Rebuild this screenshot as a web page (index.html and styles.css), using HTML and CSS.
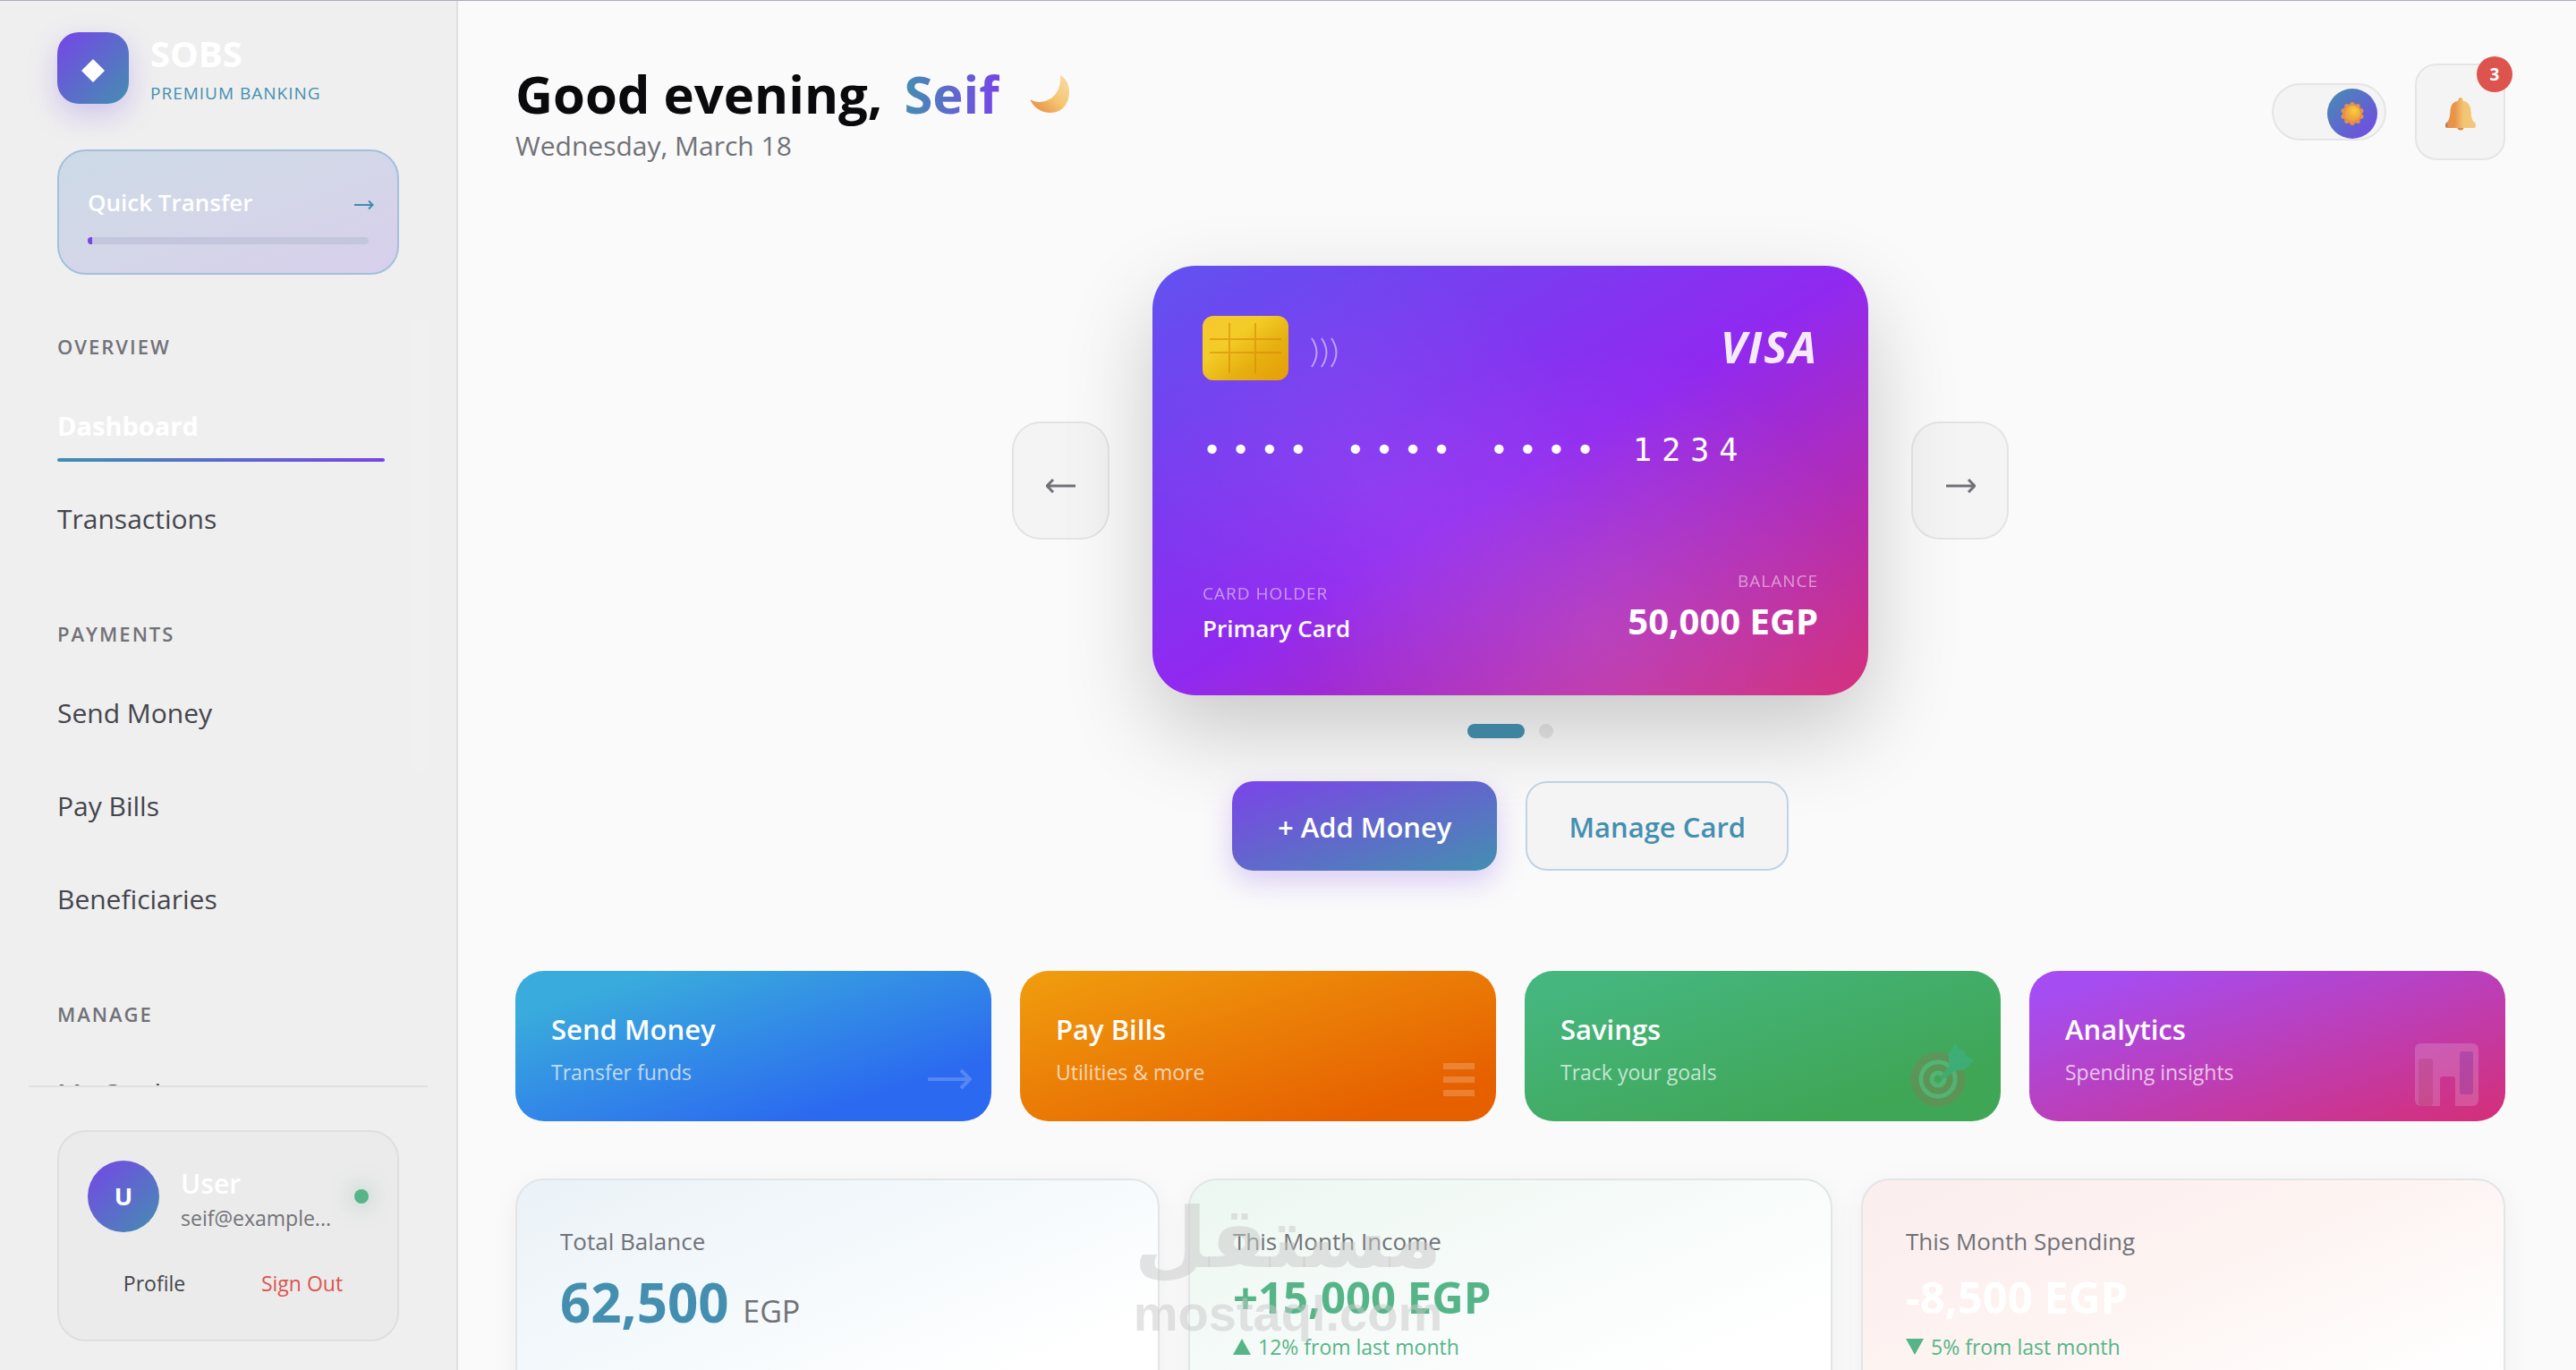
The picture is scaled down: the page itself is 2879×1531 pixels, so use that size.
FILE: index.html
```html
<!DOCTYPE html>
<html lang="en">
<head>
<meta charset="utf-8">
<meta name="viewport" content="width=device-width, initial-scale=1">
<title>SOBS Premium Banking</title>
<link rel="stylesheet" href="styles.css">
</head>
<body>
<div class="app">
  <aside class="sidebar">
    <div class="brand">
      <div class="brand-logo">
        <svg width="28" height="28" viewBox="0 0 28 28" aria-hidden="true"><path d="M14 1 27 14 14 27 1 14Z" fill="#fff"/></svg>
      </div>
      <div>
        <div class="brand-name">SOBS</div>
        <div class="brand-tag">PREMIUM BANKING</div>
      </div>
    </div>

    <a class="quick-transfer" href="#transfer">
      <span class="quick-transfer-row">
        <span>Quick Transfer</span>
        <svg width="22" height="12" viewBox="0 0 22 12" fill="none" stroke="#3e8cae" stroke-width="2" aria-hidden="true"><path d="M0 6H20M16 1.500 20.500 6 16 10.500"/></svg>
      </span>
      <span class="progress"><span class="progress-value"></span></span>
    </a>

    <nav class="nav">
      <section>
        <h2 class="nav-title">OVERVIEW</h2>
        <a class="nav-link active" href="#dashboard">Dashboard</a>
        <a class="nav-link" href="#transactions">Transactions</a>
      </section>
      <section>
        <h2 class="nav-title">PAYMENTS</h2>
        <a class="nav-link" href="#send">Send Money</a>
        <a class="nav-link" href="#bills">Pay Bills</a>
        <a class="nav-link" href="#beneficiaries">Beneficiaries</a>
      </section>
      <section>
        <h2 class="nav-title">MANAGE</h2>
        <a class="nav-link" href="#cards">My Cards</a>
      </section>
      <span class="nav-thumb"></span>
    </nav>

    <div class="account">
      <div class="account-card">
        <div class="account-row">
          <div class="avatar">U</div>
          <div class="account-text">
            <div class="account-name">User</div>
            <div class="account-mail">seif@example...</div>
          </div>
          <span class="online"></span>
        </div>
        <div class="account-actions">
          <button type="button">Profile</button>
          <button type="button" class="danger">Sign Out</button>
        </div>
      </div>
    </div>
  </aside>

  <main class="main">
    <header class="header">
      <div>
        <h1 class="greeting">
          <span>Good evening,</span>
          <span class="greeting-name">Seif</span>
          <svg width="64" height="48" viewBox="3 0 64 48" aria-hidden="true">
            <defs><linearGradient id="moon" x1="1" y1="0" x2="0" y2="1"><stop offset="0" stop-color="#f8dcae"/><stop offset=".5" stop-color="#f5c56f"/><stop offset="1" stop-color="#e4843c"/></linearGradient></defs>
            <path d="M47 3C58 9 60 25 53 36C45 49 23 48 14 32C13 30 15 31 17 32C31 36 49 27 47 3Z" fill="url(#moon)"/>
          </svg>
        </h1>
        <p class="date">Wednesday, March 18</p>
      </div>
      <div class="header-tools">
        <label class="switch">
          <input type="checkbox" checked aria-label="Light theme">
          <span class="knob">
            <svg width="28" height="28" viewBox="0 0 28 28" aria-hidden="true">
              <defs><radialGradient id="sun" cx=".6" cy=".35"><stop offset="0" stop-color="#fbcf3c"/><stop offset="1" stop-color="#efa63c"/></radialGradient></defs>
              <g fill="#e6904a"><circle cx="14" cy="14" r="11"/><circle cx="14" cy="3.500" r="2.500"/><circle cx="20.200" cy="5.500" r="2.500"/><circle cx="24" cy="10.700" r="2.500"/><circle cx="24" cy="17.300" r="2.500"/><circle cx="20.200" cy="22.500" r="2.500"/><circle cx="14" cy="24.500" r="2.500"/><circle cx="7.800" cy="22.500" r="2.500"/><circle cx="4" cy="17.300" r="2.500"/><circle cx="4" cy="10.700" r="2.500"/><circle cx="7.800" cy="5.500" r="2.500"/></g>
              <circle cx="14.500" cy="13.500" r="8.500" fill="url(#sun)"/>
            </svg>
          </span>
        </label>
        <button type="button" class="bell" aria-label="Notifications">
          <svg width="36" height="38" viewBox="0 0 36 38" aria-hidden="true">
            <defs><linearGradient id="bell"><stop offset=".3" stop-color="#e8934a"/><stop offset=".6" stop-color="#f4c473"/><stop offset="1" stop-color="#f3c77d"/></linearGradient></defs>
            <circle cx="18" cy="34" r="3.500" fill="#dd8840"/>
            <path d="M18 1C20 1 20.500 2.500 20.500 4.500C27 6 29 10 29.500 16C30 24 31 27 34 29C35.500 31 35 35 34 35H2C1 35 .5 31 2 29C5 27 6 24 6.500 16C7 10 9 6 15.500 4.500C15.500 2.500 16 1 18 1Z" fill="url(#bell)"/>
            <path d="M1 30H4V34H1Z" fill="#b98468"/>
          </svg>
          <span class="badge">3</span>
        </button>
      </div>
    </header>

    <section class="hero">
      <div class="carousel">
        <button type="button" class="carousel-arrow" aria-label="Previous card">
          <svg width="34" height="16" viewBox="0 0 34 16" fill="none" stroke="currentColor" stroke-width="3" aria-hidden="true"><path d="M33 8H1M8 1 1 8 8 15"/></svg>
        </button>
        <article class="bank-card">
          <div class="card-top">
            <div class="chip-group">
              <svg class="chip" width="96" height="72" viewBox="0 0 96 72" aria-hidden="true">
                <defs><linearGradient id="chip" x1="0" y1="0" x2="1" y2="1"><stop offset="0" stop-color="#f7c72f"/><stop offset=".35" stop-color="#f3cc28"/><stop offset=".65" stop-color="#e6b010"/><stop offset="1" stop-color="#e69c0a"/></linearGradient></defs>
                <rect width="96" height="72" rx="12" fill="url(#chip)"/>
                <path d="M30 8V64M59 8V64M8 26H88M8 41H88" stroke="#d98808" stroke-opacity=".6" stroke-width="2"/>
              </svg>
              <svg width="34" height="34" viewBox="0 0 34 34" fill="none" stroke="#fff" stroke-opacity=".5" stroke-width="2" aria-hidden="true"><path d="M2 1Q13 17 2 33M13 1Q24 17 13 33M24 1Q35 17 24 33"/></svg>
            </div>
            <div class="card-brand">VISA</div>
          </div>
          <div class="card-number">•••• •••• •••• 1234</div>
          <div class="card-bottom">
            <div>
              <div class="card-label">CARD HOLDER</div>
              <div class="card-holder">Primary Card</div>
            </div>
            <div class="card-right">
              <div class="card-label">BALANCE</div>
              <div class="card-balance">50,000 EGP</div>
            </div>
          </div>
        </article>
        <button type="button" class="carousel-arrow" aria-label="Next card">
          <svg width="34" height="16" viewBox="0 0 34 16" fill="none" stroke="currentColor" stroke-width="3" aria-hidden="true"><path d="M1 8H33M26 1 33 8 26 15"/></svg>
        </button>
      </div>
      <div class="dots"><span class="dot on"></span><span class="dot"></span></div>
      <div class="hero-actions">
        <button type="button" class="btn primary">+ Add Money</button>
        <button type="button" class="btn outline">Manage Card</button>
      </div>
    </section>

    <section class="quick-actions">
      <a class="action send" href="#send">
        <span class="action-title">Send Money</span>
        <span class="action-sub">Transfer funds</span>
        <svg class="action-icon" width="80" height="72" viewBox="0 0 80 72" fill="none" stroke="#fff" stroke-width="4" aria-hidden="true"><path d="M31 41H77M68 31 78 41 68 51"/></svg>
      </a>
      <a class="action bills" href="#bills">
        <span class="action-title">Pay Bills</span>
        <span class="action-sub">Utilities &amp; more</span>
        <svg class="action-icon" width="80" height="72" viewBox="0 0 80 72" fill="#fff" aria-hidden="true"><path d="M43 23H78V30H43ZM43 38H78V45H43ZM43 53H78V60H43Z"/></svg>
      </a>
      <a class="action savings" href="#savings">
        <span class="action-title">Savings</span>
        <span class="action-sub">Track your goals</span>
        <svg class="action-icon" width="80" height="72" viewBox="0 0 80 72" fill="none" aria-hidden="true">
          <circle cx="32" cy="41" r="26" stroke="#d0505a" stroke-width="9"/>
          <circle cx="32" cy="41" r="19" stroke="#a8e8e0" stroke-width="5"/>
          <circle cx="32" cy="41" r="13" stroke="#d0505a" stroke-width="7"/>
          <circle cx="32" cy="41" r="7" stroke="#a8e8e0" stroke-width="5"/>
          <path d="M34 39 44 27V13L51 1 56 8 62 9 63 15 72 20 62 30 50 32 36 42Z" fill="#38c6e8"/>
        </svg>
      </a>
      <a class="action analytics" href="#analytics">
        <span class="action-title">Analytics</span>
        <span class="action-sub">Spending insights</span>
        <svg class="action-icon" width="80" height="72" viewBox="0 0 80 72" aria-hidden="true">
          <path fill-rule="evenodd" d="M8 1H65Q72 1 72 8V64Q72 71 65 71H46V41Q46 38 43 38H32Q29 38 29 41V71H8Q1 71 1 64V8Q1 1 8 1Z" fill="#efe2f6"/>
          <rect x="5" y="18" width="16" height="53" rx="3" fill="#b8a898"/>
          <rect x="51" y="10" width="15" height="48" rx="3" fill="#6088d8"/>
        </svg>
      </a>
    </section>

    <section class="stats">
      <article class="stat balance">
        <div class="stat-label">Total Balance</div>
        <div class="stat-total">62,500 <span>EGP</span></div>
      </article>
      <article class="stat income">
        <div class="stat-label">This Month Income</div>
        <div class="stat-value">+15,000 EGP</div>
        <div class="stat-change"><svg width="20" height="18" viewBox="0 0 20 18" fill="currentColor" aria-hidden="true"><path d="M10 0 20 18H0Z"/></svg>12% from last month</div>
      </article>
      <article class="stat spending">
        <div class="stat-label">This Month Spending</div>
        <div class="stat-value">-8,500 EGP</div>
        <div class="stat-change"><svg width="20" height="18" viewBox="0 0 20 18" fill="currentColor" aria-hidden="true"><path d="M0 0H20L10 18Z"/></svg>5% from last month</div>
      </article>
    </section>
  </main>

  <div class="watermark">
    <div class="watermark-ar" lang="ar" dir="rtl">مستقل</div>
    <div class="watermark-en">mostaql.com</div>
  </div>
</div>
</body>
</html>
```
FILE: styles.css
```css
:root {
  --teal: #448fb0;
  --violet: #7645e8;
  --green: #56b588;
  --red: #dd544f;
  --ink: #45454c;
  --muted: #717278;
}

* { box-sizing: border-box; }

body {
  margin: 0;
  background: #fafafa;
  color: var(--ink);
  font-family: "Open Sans", "Noto Sans", sans-serif;
}

h1, h2, p { margin: 0; }
a { color: inherit; text-decoration: none; }
button { font: inherit; color: inherit; padding: 0; border: 0; background: none; cursor: pointer; }
svg { display: block; flex: none; }

.app {
  position: relative;
  display: flex;
  height: 100vh;
  overflow: hidden;
}

.app::before {
  content: "";
  position: absolute;
  inset: 0 0 auto;
  height: 1px;
  background: #a9adc6;
}

/* Sidebar */
.sidebar {
  flex: none;
  display: flex;
  flex-direction: column;
  width: 512px;
  padding: 36px 32px 32px;
  border-right: 2px solid #e0e0e0;
  background: #efefef;
}

.brand {
  display: flex;
  align-items: center;
  gap: 24px;
  margin: 0 32px;
}

.brand-logo {
  display: flex;
  align-items: center;
  justify-content: center;
  width: 80px;
  height: 80px;
  padding-top: 6px;
  border-radius: 24px;
  background: linear-gradient(135deg, var(--violet), var(--teal));
  box-shadow: 0 12px 32px rgba(118, 69, 232, .25);
}

.brand-name {
  margin-bottom: 8px;
  font-size: 40px;
  line-height: 48px;
  font-weight: 700;
  color: #fff;
}

.brand-tag {
  font-size: 19px;
  line-height: 24px;
  letter-spacing: 1px;
  color: var(--teal);
}

.quick-transfer {
  display: flex;
  flex-direction: column;
  gap: 14px;
  margin: 51px 32px 48px;
  padding: 32px;
  border: 2px solid #a3c0dc;
  border-radius: 32px;
  background: linear-gradient(to bottom right, #ccdae6, #d3d7e8 45%, #d8cfec);
}

.quick-transfer-row {
  display: flex;
  align-items: center;
  justify-content: space-between;
  margin-right: -6px;
  font-size: 26px;
  line-height: 50px;
  font-weight: 600;
  color: #fff;
}

.quick-transfer-row svg { margin-top: 6px; }

.progress {
  height: 8px;
  border-radius: 4px;
  background: #c3c6dc;
  overflow: hidden;
}

.progress-value {
  display: block;
  width: 5px;
  height: 8px;
  background: var(--violet);
}

.nav {
  position: relative;
  flex: 1;
  display: flex;
  flex-direction: column;
  gap: 72px;
  min-height: 0;
  padding: 16px 48px 0 32px;
  overflow: hidden;
}

.nav-title {
  margin-bottom: 29px;
  font-size: 22px;
  line-height: 32px;
  font-weight: 600;
  letter-spacing: 2px;
  color: var(--muted);
}

.nav-link {
  display: block;
  padding: 20px 0 16px;
  font-size: 30px;
  line-height: 48px;
}

.nav-link + .nav-link { margin-top: 20px; }

.nav-link.active {
  position: relative;
  font-weight: 700;
  font-size: 29px;
  color: #fff;
}

.nav-link.active::after {
  content: "";
  position: absolute;
  inset: auto 0 0;
  height: 4px;
  border-radius: 2px;
  background: linear-gradient(90deg, #3e8fb0, var(--violet));
}

.nav-thumb {
  position: absolute;
  top: 0;
  right: 0;
  width: 16px;
  height: 508px;
  border-radius: 8px;
  background: #f0f0f0;
}

.account {
  padding: 48px 32px 0;
  border-top: 2px solid #e1e1e1;
}

.account-card {
  padding: 32px 32px 30px;
  border: 2px solid #dedede;
  border-radius: 32px;
  background: #ebebeb;
}

.account-row {
  display: flex;
  align-items: center;
  gap: 24px;
}

.avatar {
  flex: none;
  width: 80px;
  border-radius: 50%;
  background: linear-gradient(135deg, var(--violet), var(--teal));
  color: #fff;
  font-size: 27px;
  line-height: 80px;
  font-weight: 700;
  text-align: center;
}

.account-text {
  flex: 1;
  padding-top: 8px;
}

.account-name {
  margin-bottom: 4px;
  font-size: 30px;
  line-height: 36px;
  font-weight: 600;
  color: #fff;
}

.account-mail {
  font-size: 23px;
  line-height: 32px;
  color: var(--muted);
}

.online {
  flex: none;
  width: 16px;
  height: 16px;
  border-radius: 50%;
  background: var(--green);
  box-shadow: 0 0 24px rgba(60, 140, 120, .5);
}

.account-actions {
  display: grid;
  grid-template-columns: 1fr 1fr;
  gap: 16px;
  margin-top: 24px;
}

.account-actions button {
  height: 66px;
  font-size: 23px;
}

.account-actions .danger { color: var(--red); }

/* Main column */
.main {
  flex: 1;
  min-width: 0;
  padding: 67px 79px 64px 64px;
}

.header {
  display: flex;
  align-items: center;
  justify-content: space-between;
}

.greeting {
  display: flex;
  align-items: center;
  gap: 24px;
  font-size: 58px;
  line-height: 76px;
  font-weight: 700;
  color: #0a0a0c;
}

.greeting-name {
  background: linear-gradient(90deg, var(--teal), var(--violet));
  -webkit-background-clip: text;
  background-clip: text;
  color: transparent;
}

.date {
  font-size: 30px;
  line-height: 40px;
  color: var(--muted);
}

.header-tools {
  display: flex;
  align-items: center;
  gap: 32px;
}

.switch {
  position: relative;
  display: block;
}

.switch input {
  appearance: none;
  display: block;
  width: 128px;
  height: 64px;
  margin: 0;
  border: 2px solid #e5e5e5;
  border-radius: 32px;
  background: #f4f4f4;
}

.knob {
  position: absolute;
  top: 6px;
  right: 10px;
  display: flex;
  align-items: center;
  justify-content: center;
  width: 56px;
  height: 56px;
  border-radius: 50%;
  background: linear-gradient(135deg, var(--teal), var(--violet));
}

.bell {
  position: relative;
  display: flex;
  align-items: center;
  justify-content: center;
  width: 101px;
  height: 108px;
  padding-top: 4px;
  border: 2px solid #e5e5e5;
  border-radius: 24px;
  background: #f4f4f4;
}

.badge {
  position: absolute;
  top: -10px;
  right: -10px;
  width: 40px;
  border-radius: 50%;
  background: var(--red);
  color: #fff;
  font-size: 19px;
  line-height: 40px;
  font-weight: 700;
}

.hero {
  display: flex;
  flex-direction: column;
  align-items: center;
  margin-top: 114px;
}

.carousel {
  display: flex;
  align-items: center;
  gap: 48px;
}

.carousel-arrow {
  display: flex;
  align-items: center;
  justify-content: center;
  width: 109px;
  height: 132px;
  padding-top: 12px;
  border: 2px solid rgba(0, 0, 0, .07);
  border-radius: 32px;
  background: rgba(0, 0, 0, .025);
  color: var(--muted);
}

.bank-card {
  display: flex;
  flex-direction: column;
  width: 800px;
  height: 480px;
  padding: 56px;
  border-radius: 48px;
  background:
    radial-gradient(circle at 30% 50%, rgba(255, 255, 255, .06), transparent 40%),
    radial-gradient(circle at 62% 85%, rgba(255, 255, 255, .1), transparent 50%),
    linear-gradient(to bottom right, #6152f0, #9029f0 50%, #d4307a);
  box-shadow: 0 40px 100px rgba(0, 0, 0, .2);
  color: #fff;
}

.card-top {
  display: flex;
  justify-content: space-between;
}

.chip-group {
  display: flex;
  align-items: center;
  gap: 24px;
  height: 72px;
}

.chip-group svg:last-child { margin-top: 10px; }

.card-brand {
  font-size: 49px;
  line-height: 68px;
  font-weight: 700;
  font-style: italic;
  letter-spacing: 2px;
  opacity: .9;
}

.card-number {
  margin-top: 46px;
  font-family: "DejaVu Sans Mono", monospace;
  font-size: 35px;
  line-height: 64px;
  letter-spacing: 11px;
  white-space: nowrap;
}

.card-bottom {
  display: flex;
  align-items: flex-end;
  justify-content: space-between;
  margin-top: auto;
}

.card-label {
  font-size: 19px;
  line-height: 28px;
  letter-spacing: 1px;
  opacity: .5;
}

.card-holder {
  margin-top: 6px;
  font-size: 26px;
  line-height: 38px;
  font-weight: 600;
}

.card-right { text-align: right; }

.card-balance {
  margin-top: 4px;
  font-size: 40px;
  line-height: 54px;
  font-weight: 700;
}

.dots {
  display: flex;
  gap: 16px;
  margin-top: 32px;
}

.dot {
  width: 16px;
  height: 16px;
  border-radius: 8px;
  background: rgba(0, 0, 0, .08);
}

.dot.on {
  width: 64px;
  background: #3e83a0;
}

.hero-actions {
  display: flex;
  gap: 32px;
  margin-top: 48px;
}

.btn {
  height: 100px;
  padding: 2px 46px 0;
  border: 2px solid transparent;
  border-radius: 24px;
  font-size: 31px;
  font-weight: 600;
}

.btn.primary {
  border: 0;
  padding: 2px 51px 0;
  background: linear-gradient(to bottom right, #7a45ea, #6a5cd4 35%, #448fb0);
  box-shadow: 0 12px 32px rgba(118, 69, 232, .25);
  color: #fff;
}

.btn.outline {
  border-color: #bfd3e4;
  background: #f4f4f4;
  color: var(--teal);
}

.quick-actions {
  display: grid;
  grid-template-columns: repeat(4, 1fr);
  gap: 32px;
  margin-top: 112px;
}

.action {
  position: relative;
  display: flex;
  flex-direction: column;
  gap: 10px;
  padding: 43px 40px 39px;
  border-radius: 32px;
  color: #fff;
}

.action.send { background: linear-gradient(to bottom right, #39abdc 15%, #2b69f0 80%); }
.action.bills { background: linear-gradient(to bottom right, #f09e0e, #e66000 85%); }
.action.savings { background: linear-gradient(to bottom right, #45b67e 10%, #3fa656 80%); }
.action.analytics { background: linear-gradient(to bottom right, #a54df2 10%, #d2307e 95%); }

.action-title {
  font-size: 31px;
  line-height: 44px;
  font-weight: 600;
}

.action-sub {
  font-size: 23px;
  line-height: 32px;
  color: rgba(255, 255, 255, .7);
}

.action-icon {
  position: absolute;
  right: 22px;
  bottom: 16px;
  opacity: .2;
}

.stats {
  display: grid;
  grid-template-columns: repeat(3, 1fr);
  gap: 32px;
  margin-top: 64px;
}

.stat {
  min-height: 300px;
  padding: 48px;
  border: 2px solid #e2e5e8;
  border-radius: 32px;
  box-shadow: 0 8px 32px rgba(0, 0, 0, .05);
}

.stat.balance { background: linear-gradient(to bottom right, #ebf2f7, #f4f9fc 40%, #fff 75%); }
.stat.income { background: linear-gradient(to bottom right, #ecf7f0, #f6fbf9 40%, #fff 75%); }
.stat.spending { background: linear-gradient(to bottom right, #fbeeee, #fdf3f1 40%, #fff 85%); }

.stat-label {
  margin-bottom: 8px;
  font-size: 26px;
  line-height: 40px;
  color: var(--muted);
}

.stat-total {
  font-size: 60px;
  line-height: 80px;
  font-weight: 700;
  color: var(--teal);
}

.stat-total span {
  font-size: 34px;
  font-weight: 400;
  color: var(--muted);
}

.stat-value {
  margin-bottom: 6px;
  font-size: 49px;
  line-height: 68px;
  font-weight: 700;
}

.income .stat-value { color: var(--green); }
.spending .stat-value { color: #fff; }

.stat-change {
  display: flex;
  align-items: center;
  gap: 8px;
  font-size: 23px;
  line-height: 32px;
  color: var(--green);
}

/* Watermark laid over the page, centred on the window */
.watermark {
  position: absolute;
  left: 50%;
  bottom: 31px;
  transform: translateX(-50%);
  text-align: center;
  font-weight: 700;
  color: rgba(200, 200, 200, .5);
  pointer-events: none;
}

.watermark-ar {
  font-family: "DejaVu Sans", sans-serif;
  font-size: 94px;
  line-height: 104px;
}

.watermark-en {
  font-family: "Liberation Sans", sans-serif;
  font-size: 56px;
  line-height: 64px;
}
```
